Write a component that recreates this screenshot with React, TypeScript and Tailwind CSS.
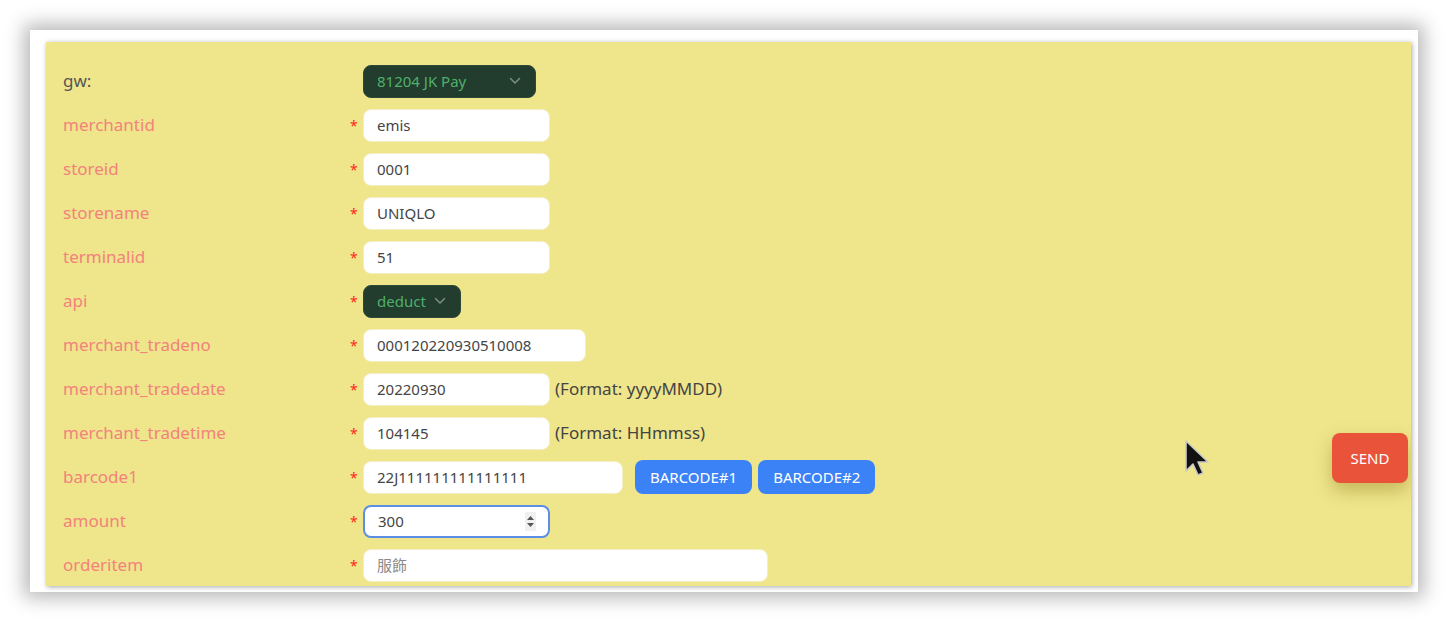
import React from "react";

const font = { fontFamily: '"Noto Sans", "Open Sans", "Noto Sans CJK TC", sans-serif' };

function Chevron() {
  return (
    <svg width="12" height="8" viewBox="0 0 12 8" fill="none">
      <path d="M1.5 1.5 L6 6 L10.5 1.5" stroke="#7d8f85" strokeWidth="1.5" strokeLinecap="round" strokeLinejoin="round" />
    </svg>
  );
}

function Row({ label, required = true, children, gray = false }: { label: string; required?: boolean; children: React.ReactNode; gray?: boolean }) {
  return (
    <div className="flex items-center h-[44px]">
      <div className={`w-[287px] text-[17px] ${gray ? "text-[#555555]" : "text-[#f3827c]"}`}>{label}</div>
      <div className="w-[13px] text-[#ff2a1a] text-[14px] leading-none pt-[1px]">{required ? "*" : ""}</div>
      <div className="flex items-center">{children}</div>
    </div>
  );
}

function Input({ value, w, placeholder = false, focus = false }: { value: string; w: string; placeholder?: boolean; focus?: boolean }) {
  return (
    <div
      className={`${w} h-[33px] bg-white rounded-lg flex items-center pl-[13px] pr-[12px] text-[15px] ${placeholder ? "text-[#8a8a8a]" : "text-[#454545]"} ${focus ? "border-[2px] border-[#5b8ee6] pl-[12px]" : "border border-[#f3eec3]"}`}
    >
      <span className="flex-1">{value}</span>
      {focus && (
        <span className="flex flex-col items-center justify-center w-[11px] h-[19px] bg-[#f0f0f0] gap-[3px]">
          <svg width="7" height="4" viewBox="0 0 7 4"><path d="M0 4 L3.5 0 L7 4Z" fill="#555" /></svg>
          <svg width="7" height="4" viewBox="0 0 7 4"><path d="M0 0 L3.5 4 L7 0Z" fill="#555" /></svg>
        </span>
      )}
    </div>
  );
}

function Select({ value, w }: { value: string; w: string }) {
  return (
    <div className={`${w} h-[33px] bg-[#223c2e] rounded-lg flex items-center pl-[13px] pr-[14px] text-[15px] text-[#4fb06c] border border-[#2e4a3a]`}>
      <span className="flex-1">{value}</span>
      <Chevron />
    </div>
  );
}

function BlueBtn({ text }: { text: string }) {
  return (
    <div className="h-[34px] px-[15px] rounded-lg bg-[#3b82f6] text-white text-[15px] flex items-center">{text}</div>
  );
}

export default function App() {
  return (
    <div className="w-[1448px] h-[622px] bg-white relative overflow-hidden" style={font}>
      <div className="absolute left-[30px] top-[30px] w-[1388px] h-[562px] bg-white shadow-[0_0_18px_6px_rgba(0,0,0,0.28)] pl-[16px] pr-[7px] pt-[12px]">
        <div className="relative h-[544px] bg-[#efe58b] shadow-[1px_1px_5px_rgba(0,0,0,0.35)] overflow-hidden pl-[17px] pt-[17px]">
          <Row label="gw:" required={false} gray>
            <Select value="81204 JK Pay" w="w-[173px]" />
          </Row>
          <Row label="merchantid"><Input value="emis" w="w-[187px]" /></Row>
          <Row label="storeid"><Input value="0001" w="w-[187px]" /></Row>
          <Row label="storename"><Input value="UNIQLO" w="w-[187px]" /></Row>
          <Row label="terminalid"><Input value="51" w="w-[187px]" /></Row>
          <Row label="api"><Select value="deduct" w="w-[98px]" /></Row>
          <Row label="merchant_tradeno"><Input value="000120220930510008" w="w-[223px]" /></Row>
          <Row label="merchant_tradedate">
            <Input value="20220930" w="w-[187px]" />
            <span className="ml-[5px] text-[17px] text-[#444]">(Format: yyyyMMDD)</span>
          </Row>
          <Row label="merchant_tradetime">
            <Input value="104145" w="w-[187px]" />
            <span className="ml-[5px] text-[17px] text-[#444]">(Format: HHmmss)</span>
          </Row>
          <Row label="barcode1">
            <Input value="22J111111111111111" w="w-[260px]" />
            <div className="ml-[12px] flex gap-[6px]">
              <BlueBtn text="BARCODE#1" />
              <BlueBtn text="BARCODE#2" />
            </div>
          </Row>
          <Row label="amount"><Input value="300" w="w-[187px]" focus /></Row>
          <Row label="orderitem"><Input value="服飾" w="w-[405px]" placeholder /></Row>

          <div className="absolute left-[1286px] top-[391px] w-[76px] h-[50px] rounded-lg bg-[#e9533a] text-white text-[15px] flex items-center justify-center shadow-[0_8px_18px_rgba(120,100,0,0.35)]">
            SEND
          </div>

          <svg className="absolute left-[1138px] top-[397px]" width="30" height="44" viewBox="0 0 30 44">
            <path d="M2 2 L2 32 L9 25 L14 36 L19 34 L14 23 L24 23 Z" fill="#111" stroke="#c8c8c8" strokeWidth="1.6" strokeLinejoin="round" />
          </svg>
        </div>
      </div>
    </div>
  );
}
